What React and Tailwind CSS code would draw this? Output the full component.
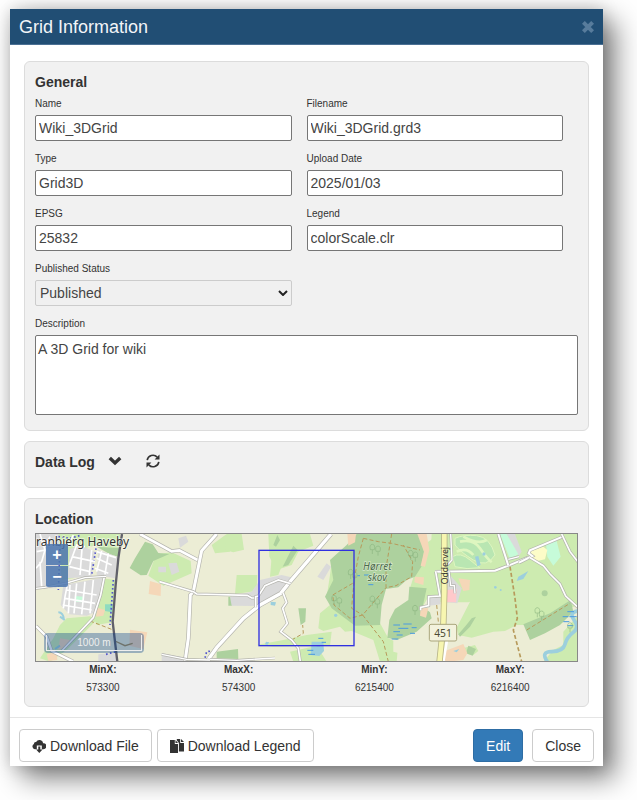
import { useState } from 'react'

const FIELDS = [
  { id: 'name', label: 'Name', value: 'Wiki_3DGrid' },
  { id: 'filename', label: 'Filename', value: 'Wiki_3DGrid.grd3' },
  { id: 'type', label: 'Type', value: 'Grid3D' },
  { id: 'uploadDate', label: 'Upload Date', value: '2025/01/03' },
  { id: 'epsg', label: 'EPSG', value: '25832' },
  { id: 'legend', label: 'Legend', value: 'colorScale.clr' },
]

const BOUNDS = [
  { label: 'MinX:', value: '573300' },
  { label: 'MaxX:', value: '574300' },
  { label: 'MinY:', value: '6215400' },
  { label: 'MaxY:', value: '6216400' },
]

const labelCls = 'block h-[23px] text-[10px] leading-6 text-[#333]'
const inputCls = 'block h-[26px] w-full rounded-xs border border-[#767676] bg-white px-[3px] text-sm text-[#444] outline-none focus:border-blue-500'
const btnCls = 'flex h-[33px] items-center gap-1 rounded border px-3 text-sm'

function Panel({ children, className = '' }) {
  return <section className={`rounded-md border border-[#dcdcdc] bg-[#f1f1f1] px-2.5 ${className}`}>{children}</section>
}

function CloudDownloadIcon() {
  return (
    <svg viewBox="0 0 14 14" className="h-3.5 w-3.5 fill-current" aria-hidden="true">
      <path d="M2.8 10.2A2.8 2.8 0 0 1 1.9 5 2 2 0 0 1 4.1 3 3.8 3.8 0 0 1 11.2 4.2 3 3 0 0 1 11.4 10.2H9.8V6.4H4.8v3.8z" />
      <path d="M6.3 7.4h2v3.1h2.2L7.3 14 4.1 10.5h2.2z" />
    </svg>
  )
}

function DuplicateIcon() {
  return (
    <svg viewBox="0 0 14 14" className="h-3.5 w-3.5 fill-current" aria-hidden="true">
      <path d="M0 1h4.8v4h3.2v9H0z" />
      <path d="M5.5 1 8 4.1H5.5z" />
      <path d="M6.8 0h3.4v3.9H14v8.6H8.9V4L6.8 1.2z" />
      <path d="m11 0 3 3.1h-3z" />
    </svg>
  )
}

function RefreshIcon() {
  return (
    <svg viewBox="0 0 16 16" className="h-4 w-4" fill="none" stroke="#333" strokeWidth="1.6" aria-hidden="true">
      <path d="M2.2 7.2A5.8 5.8 0 0 1 12.2 4.1" />
      <path d="M13.8 8.8A5.8 5.8 0 0 1 3.8 11.9" />
      <path d="M14.5 1.4v5H9.6z" fill="#333" stroke="none" />
      <path d="M1.5 14.6v-5h4.9z" fill="#333" stroke="none" />
    </svg>
  )
}

// white road on a grey casing
function Road({ d, w = 7 }) {
  return (
    <>
      <path d={d} stroke="#b4b4ae" strokeWidth={w + 4} />
      <path d={d} stroke="#fff" strokeWidth={w} />
    </>
  )
}

const ROADS = [
  { d: 'M330 27 425 79 448 76 503 105', w: 8 },
  { d: 'M560 27 515 77 490 200 481 210 475 340 465 410', w: 9 },
  { d: 'M388 170 490 200 500 207 652 211 665 219 682 219', w: 5 },
  { d: 'M903 27 780 170 752 205 690 240 640 280 560 368 530 410', w: 10 },
  { d: 'M677 247V215L685 213 705 182 745 165 782 176', w: 5 },
  { d: 'M759 203 770 232 758 250 772 295 752 320 785 345 805 370 811 410', w: 5 },
  { d: 'M540 403 620 406 735 399', w: 4 },
  { d: 'M1215 140 1395 137 1435 122 1495 97', w: 6 },
  { d: 'M1217 140 1230 213 1196 215V242L1172 247V256', w: 5 },
  { d: 'M1405 27 1435 122', w: 6 },
  { d: 'M1435 103 1467 95', w: 4 },
  { d: 'M1467 113 1507 93 1496 85 1500 76 1598 35', w: 6 },
  { d: 'M1595 27 1620 80 1645 112', w: 5 },
  { d: 'M1498 97 1540 122 1560 147 1590 177 1607 213 1645 248', w: 5 },
  { d: 'M1257 140 1262 182 1273 182 1275 205', w: 4 },
  { d: 'M1262 27 1266 105 1252 120', w: 4 },
  { d: 'M18 303 50 335 65 378 130 410', w: 7 },
  { d: 'M95 378 190 278 212 210 224 150', w: 5 },
  { d: 'M18 190 44 187 110 174 165 158 228 154', w: 4 },
  { d: 'M395 388 470 403 540 405', w: 4 },
]

const STREETS =
  'M118 120 140 60 165 65M125 95 195 110M118 125 180 140M158 45 150 150M185 75 178 150M30 27 45 75 35 110 18 130M20 80 46 75M30 110 35 185M112 180 105 215 100 250M110 195 200 210M105 220 195 235M120 180 115 265M140 175 132 265M165 170 155 268M190 165 180 265M98 240 185 255M200 100 245 120M215 78 200 140M235 85 225 148M200 80 258 98M195 130 235 145M130 30 115 60M60 35 50 55'

const TREES = [
  [1027, 75], [1044, 80], [962, 150], [974, 158], [912, 228], [928, 235], [1027, 230], [1042, 238],
  [1142, 93], [1156, 98], [1155, 258], [1522, 265], [1535, 275], [1620, 310],
]

function LocationMap() {
  return (
    <div className="relative h-[129px] overflow-hidden border border-[#888] bg-[#ecedd5]">
      <svg viewBox="18 27 1623 381" preserveAspectRatio="xMidYMid slice" className="block h-full w-full" fill="none" role="img" aria-label="Map of the grid location">
        <rect x="0" y="0" width="1660" height="430" fill="#ecedd5" />

        {/* meadows and parks */}
        <g fill="#cdebb0">
          <path d="M85 27H270L262 95 200 60 155 72 130 160 95 165z" />
          <path d="M218 160 255 165 246 292 200 300 190 272zM110 280 180 274 200 285 110 375 60 410 30 400 70 340 90 300z" />
          <path d="M378 88 425 82 482 108 485 145 400 182 355 152zM545 60 590 27 600 80 555 85z" />
          <path d="M590 27H635L642 74 610 82 585 75z" />
          <path d="M620 150 682 150 680 198 615 207zM715 27 840 27 850 62 805 80 785 120 740 135 718 95z" />
          <path d="M725 95 760 110 745 150 720 155z" />
          <path d="M905 110 900 150 890 215 900 240 870 265 865 310 880 318 930 305 945 320 965 318 1030 345 1050 410 1100 410 1105 355 1075 340 1020 240 920 180z" />
          <path d="M680 360 760 345 830 330 905 320 900 362 730 365zM780 380 860 362 890 410 790 410z" />
          <path d="M1180 60 1230 27V215L1195 215 1178 245 1140 190z" />
          <path d="M1205 27H1645V240L1480 300 1460 300 1425 318 1390 320 1325 338 1285 330 1280 308 1320 230 1315 232 1210 232 1195 215z" />
          <path d="M1600 320 1645 270V410H1540L1570 375 1600 360z" />
          <path d="M1290 372 1335 360 1345 378 1330 390 1300 385z" />
        </g>

        {/* pastures inside the farmland */}
        <g fill="#ecedd5">
          <path d="M1060 190 1098 188 1130 170 1135 190 1110 225 1100 262 1070 280 1058 250z" />
          <path d="M1090 345 1190 305 1200 350 1150 395 1090 380z" />
        </g>

        {/* woodland */}
        <g fill="#add19e">
          <path d="M345 50 368 58 385 84 418 87 370 108 350 150 332 151 299 129 315 100z" />
          <path d="M980 27H1170L1182 80 1174 125 1155 155 1130 165 1105 187 1068 192 1055 240 1050 300 975 302 905 250 885 215 910 165 900 105 950 60z" />
          <path d="M1095 252 1135 225 1138 185 1190 190 1178 245 1200 262 1205 280 1160 320 1100 345 1072 338 1078 285z" />
          <path d="M1480 298 1560 265 1622 225 1630 260 1590 300 1545 325 1500 345z" />
          <path d="M200 65 268 70 264 95 240 88z" />
          <path d="M1315 362 1338 372 1328 392 1308 385z" />
          <path d="M758 125 790 62 803 75 775 120zM730 60 742 30 750 45 738 65z" />
          <path d="M560 380 624 372 625 402 560 400zM595 215 606 215 606 242 595 242z" />
          <path d="M805 250 828 250 826 290 812 300zM1285 328Q1310 300 1325 280L1338 275 1320 305 1290 335z" />
          <circle cx="1544" cy="205" r="9" />
        </g>

        {/* built-up areas */}
        <g fill="#dadada">
          <path d="M18 27H85L88 60 80 190H18zM120 72 150 60 195 80 185 155 112 160z" />
          <path d="M205 75 262 95 255 160 200 150zM100 180 218 158 213 205 195 262 170 272 118 268 92 240z" />
          <path d="M600 215 665 200 690 165 755 150 790 158 775 190 740 208 680 243 605 242z" />
          <path d="M445 40 468 32 475 50 450 68zM415 115 440 113 448 140 425 150zM385 125 408 125 408 142 385 142z" />
          <path d="M862 155 890 115 903 125 880 165zM1230 150 1260 150 1295 190 1282 235 1250 232z" />
          <path d="M395 385 470 398 465 410H395zM205 388 262 383 262 410H205z" />
          <path d="M1195 215 1230 215 1232 238 1198 242zM1430 27 1455 27 1475 80 1465 95z" />
        </g>

        {/* farmyards and brownfield */}
        <g fill="#f5d7b8">
          <path d="M360 168 393 178 392 213 356 207zM300 314 352 322 340 372 298 362z" />
          <path d="M202 248 225 255 220 272 198 275zM90 340 120 345 115 365 85 375zM50 388 80 380 82 405 55 408z" />
          <path d="M952 27 978 27 975 52 955 62zM1162 27H1190L1198 75 1185 125 1172 122 1182 80z" />
          <path d="M1155 155 1182 157 1180 180 1153 172zM1285 160 1320 165 1318 195 1300 198z" />
          <path d="M1172 248 1195 250 1188 278 1170 272zM1245 378 1300 357 1312 385 1300 405 1255 410 1240 405z" />
        </g>
        <path d="M1250 195 1280 192 1278 232 1250 232z" fill="#ffc9cb" />

        {/* golf course */}
        <g fill="#b9e6b2" stroke="#def6c0" strokeWidth="3">
          <path d="M1275 40Q1300 28 1340 32T1395 90Q1370 130 1330 105T1275 60z" />
          <path d="M1268 95Q1290 80 1320 105T1350 128Q1310 135 1275 125z" />
        </g>
        <path d="M1290 50Q1330 40 1350 70T1385 112M1280 80Q1310 65 1330 90M1300 35Q1345 60 1370 45" stroke="#def6c0" strokeWidth="8" />

        <g fill="#c6fbd9">
          <path d="M1410 27 1430 27 1465 88 1440 103zM1548 55 1580 48 1592 95 1570 122 1552 95z" />
          <path d="M135 213 160 215 155 232 138 230z" />
        </g>
        <path d="M225 238 248 238 246 262 225 258z" fill="#8edcc0" />
        <path d="M1502 78 1540 65 1552 75 1545 103 1522 108 1503 95z" fill="#fdfcc8" />

        {/* water */}
        <g fill="#9ccfdd">
          <path d="M845 350 880 350 882 378 868 393 842 390z" />
          <path d="M1335 95 1345 93 1352 120 1342 124zM1465 155 1495 138 1480 162 1460 168zM722 230 738 232 735 242 722 240z" />
          <path d="M708 350 718 352 712 360 705 358zM1270 378 1288 372 1280 382z" />
          <circle cx="917" cy="271" r="5" />
          <circle cx="1396" cy="187" r="4" />
          <circle cx="1412" cy="195" r="3" />
          <circle cx="1362" cy="87" r="5" />
        </g>
        <path d="M1645 258Q1615 262 1632 285T1630 322 1605 358 1565 380 1552 410" stroke="#9ccfdd" strokeWidth="11" />
        <path d="M85 262Q100 262 102 285M90 275 104 285M75 372 90 362" stroke="#9ccfdd" strokeWidth="6" />
        <path
          d="M982 152H990M1002 150H1022M1015 179H1030M1020 159H1026M1090 320H1110M1100 330H1118M1105 310H1135M1120 297H1145M1085 342H1105M1145 308H1160M1090 300H1110M1140 325H1155M865 340H880M832 376H850M835 388H855M875 352H888M860 362H870M1598 275H1615M1600 290H1618M1618 275H1640M1612 260H1632M1612 302H1630"
          stroke="#4a9be0"
          strokeWidth="3"
        />

        {/* footpaths */}
        <g stroke="#b79a5b" strokeWidth="3" strokeDasharray="12 7">
          <path d="M1000 40 985 95 975 150 968 210 965 250 998 270M1000 40 1045 50 1085 55 1170 75M1085 27 1068 130 1068 188 1098 182 1145 155 1148 110 1120 60M968 175 908 210 912 240 960 280 998 270 1068 188M998 270 1060 350 1075 410" />
          <path d="M1440 125 1455 220 1462 280 1450 315 1475 410" strokeWidth="5" />
          <path d="M1490 315 1620 235M1220 240 1225 290M180 288 250 315M785 345 820 325 818 300" />
        </g>
        <path d="M255 348 285 362 308 355" stroke="#a98f5a" strokeWidth="4" />
        <path d="M85 35 120 40 155 30M198 70 185 150M250 165 240 300M228 388 258 380M522 410 530 380 545 378M90 60 85 195" stroke="#5457cc" strokeWidth="5" strokeDasharray="5 7" />

        <path d={STREETS} stroke="#fff" strokeWidth="5" />
        {ROADS.map((r) => <Road key={r.d} d={r.d} w={r.w} />)}

        {/* railway */}
        <path d="M276 27 265 100 257 180 248 290 262 410" stroke="#60606a" strokeWidth="7" />

        {/* main road 451 */}
        <path d="M1258 300 1250 350 1240 410" stroke="#fff" strokeWidth="8" />
        <path d="M1243 20V200L1240 300 1228 415" stroke="#b7b487" strokeWidth="19" />
        <path d="M1243 20V200L1240 300 1228 415" stroke="#f7f6b0" strokeWidth="14" />
        <rect x="1198" y="298" width="82" height="50" rx="5" fill="#f3f2dd" stroke="#aaa67c" strokeWidth="3" />

        <g stroke="#85b07b" strokeWidth="2" strokeOpacity=".8">
          {TREES.map(([x, y]) => <path key={`${x}-${y}`} d={`M${x} ${y + 12}V${y}M${x - 6} ${y - 1}q-4 -15 6 -16 10 1 6 16z`} />)}
        </g>

        <g fontFamily="'Noto Sans', sans-serif" fill="#333">
          <text x="18" y="64" fontSize="36" stroke="#fff" strokeWidth="5" strokeOpacity=".6" paintOrder="stroke">ranbjerg Haveby</text>
          <g fontSize="30" fontStyle="italic" textAnchor="middle" fill="#4d6b4b" stroke="#d5e8cc" strokeWidth="4" paintOrder="stroke">
            <text x="1042" y="134">Hørret</text>
            <text x="1042" y="168">skov</text>
          </g>
          <text x="1239" y="336" fontSize="31" textAnchor="middle" fill="#4b4b33">451</text>
          <text transform="translate(1254 122) rotate(-90)" fontSize="26" textAnchor="middle">Oddervej</text>
        </g>

        <rect x="687" y="76" width="285" height="286" stroke="#3030e0" strokeWidth="4" />
      </svg>

      <div className="absolute top-2.5 left-2.5 flex flex-col gap-px">
        <button type="button" aria-label="Zoom in" className="flex h-[21px] w-[22px] items-center justify-center rounded-t-xs bg-[#4a74ae]/85 text-base font-bold text-white">+</button>
        <button type="button" aria-label="Zoom out" className="flex h-[21px] w-[22px] items-center justify-center rounded-b-xs bg-[#4a74ae]/85 text-base font-bold text-white">−</button>
      </div>
      <div className="absolute bottom-2 left-2 rounded bg-[#003c88]/35 p-0.5">
        <div className="h-4 w-24 border border-t-0 border-[#eee] text-center text-[10px] leading-4 text-[#eee]">1000 m</div>
      </div>
    </div>
  )
}

export default function App() {
  const [values, setValues] = useState(() => Object.fromEntries(FIELDS.map((f) => [f.id, f.value])))
  const [description, setDescription] = useState('A 3D Grid for wiki')

  return (
    <div className="min-h-screen overflow-hidden bg-white pt-[9px] pr-[34px] pb-[34px] pl-2.5 font-['Liberation_Sans',Arial,sans-serif] text-[#333]">
      <div role="dialog" aria-labelledby="dialog-title" className="bg-white shadow-[12px_12px_26px_rgba(0,0,0,0.5),0_0_16px_rgba(0,0,0,0.2)]">
        <header className="flex h-9 items-center justify-between border-b border-[#4b7094] bg-[#214e74] px-[9px]">
          <h1 id="dialog-title" className="text-lg text-[#f2f5f8]">Grid Information</h1>
          <button type="button" aria-label="Close dialog" className="text-[#587c9c]">
            <svg viewBox="0 0 12 12" className="h-3 w-3" stroke="currentColor" strokeWidth="4" aria-hidden="true">
              <path d="m1.4 1.4 9.2 9.2M10.6 1.4 1.4 10.6" />
            </svg>
          </button>
        </header>

        <div className="flex flex-col gap-2.5 px-3.5 pt-4 pb-2.5">
          <Panel className="pt-2.5 pb-[15px]">
            <h2 className="text-sm font-bold">General</h2>
            <div className="grid grid-cols-2 gap-y-1.5">
              {FIELDS.map((f) => (
                <div key={f.id} className="pr-[15px]">
                  <label htmlFor={f.id} className={labelCls}>{f.label}</label>
                  <input id={f.id} type="text" value={values[f.id]} onChange={(e) => setValues({ ...values, [f.id]: e.target.value })} className={inputCls} />
                </div>
              ))}
              <div className="pr-[15px]">
                <label htmlFor="status" className={labelCls}>Published Status</label>
                <div className="relative">
                  <select id="status" defaultValue="Published" className="block h-[26px] w-full appearance-none rounded-xs border border-[#ccc] bg-[#f0f0f0] px-1 text-sm text-[#444]">
                    <option>Published</option>
                    <option>Unpublished</option>
                  </select>
                  <svg viewBox="0 0 10 6" className="pointer-events-none absolute top-2.5 right-1 h-1.5 w-2.5" fill="none" stroke="#222" strokeWidth="2" aria-hidden="true">
                    <path d="m1 1 4 4 4-4" />
                  </svg>
                </div>
              </div>
            </div>
            <label htmlFor="description" className={`${labelCls} mt-1.5`}>Description</label>
            <textarea id="description" value={description} onChange={(e) => setDescription(e.target.value)} className="block h-20 w-full resize-none rounded-xs border border-[#767676] bg-white px-0.5 py-[3px] text-sm text-[#444] outline-none" />
          </Panel>

          <Panel className="flex items-start pt-2.5 pb-[15px]">
            <h2 className="text-sm font-bold">Data Log</h2>
            <button type="button" aria-label="Expand data log" className="mt-px ml-3 flex h-4 w-4 items-center justify-center">
              <svg viewBox="0 0 14 10" className="h-2.5 w-3.5" fill="none" stroke="#333" strokeWidth="3.4" aria-hidden="true">
                <path d="m1.8 2 5.2 5 5.2-5" />
              </svg>
            </button>
            <button type="button" aria-label="Refresh data log" className="mt-px ml-[22px]"><RefreshIcon /></button>
          </Panel>

          <Panel className="pt-2.5 pb-2.5">
            <h2 className="mb-1 text-sm font-bold">Location</h2>
            <LocationMap />
            <dl className="grid grid-cols-4 text-center text-[10px]">
              {BOUNDS.map((b) => (
                <div key={b.label}>
                  <dt className="leading-4 font-bold">{b.label}</dt>
                  <dd className="mt-0.5 leading-4">{b.value}</dd>
                </div>
              ))}
            </dl>
          </Panel>
        </div>

        <footer className="flex items-center gap-[5px] border-t border-[#e5e5e5] px-[9px] pt-[11px] pb-1">
          <button type="button" className={`${btnCls} border-[#ccc] bg-white text-[#333]`}>
            <CloudDownloadIcon />
            Download File
          </button>
          <button type="button" className={`${btnCls} border-[#ccc] bg-white text-[#333]`}>
            <DuplicateIcon />
            Download Legend
          </button>
          <button type="button" className={`${btnCls} mr-1 ml-auto border-[#2e6da4] bg-[#337ab7] text-white`}>Edit</button>
          <button type="button" className={`${btnCls} border-[#ccc] bg-white text-[#333]`}>Close</button>
        </footer>
      </div>
    </div>
  )
}
